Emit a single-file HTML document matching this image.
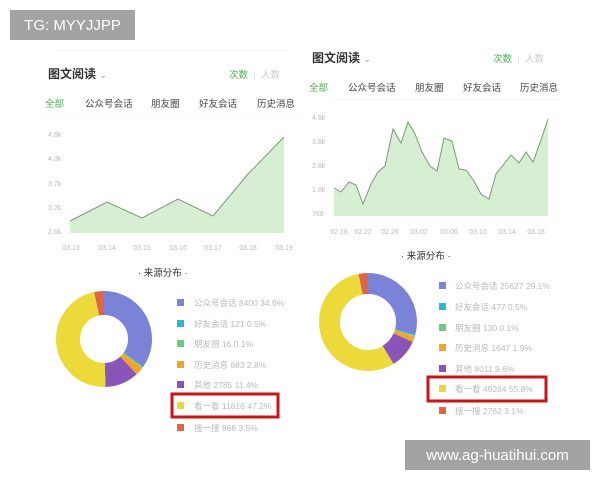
<!DOCTYPE html>
<html><head><meta charset="utf-8"><style>
body{margin:0;width:600px;height:480px;background:#fff;position:relative;overflow:hidden;font-family:"Liberation Sans","Noto Sans CJK SC",sans-serif}
.a{position:absolute;white-space:nowrap}
.t{font-size:12px;color:#333;font-weight:bold}
.tab{font-size:9.5px;color:#444}
.g{color:#4caf50}
.lg{font-size:8.5px;color:#bbb}
.sq{position:absolute;width:7px;height:7px}
.wm{position:absolute;background:#a3a3a3;color:#fff;font-size:15px;display:flex;align-items:center;justify-content:center}
</style></head><body>
<svg class="a" style="left:0;top:0" width="600" height="480">
<line x1="55" y1="50" x2="288" y2="50" stroke="#f2f2f2"/>
<line x1="40" y1="116" x2="300" y2="116" stroke="#f4f4f4"/>
<line x1="330" y1="99" x2="560" y2="99" stroke="#f4f4f4"/>
<polygon fill="#d6efd3" points="70,233 70,221 107,202 142,218 178,199 213,216 248,174 284,137 284,233"/>
<polyline fill="none" stroke="#7a9a76" stroke-width="1" points="70,221 107,202 142,218 178,199 213,216 248,174 284,137"/>
<polygon fill="#d6efd3" points="334,216 334,188 341,192 349,182 356,185 363,204 371,184 378,172 385,166 393,129 401,143 408,122 415,134 422,152 430,166 437,171 444,138 452,141 459,169 466,170 474,181 481,194 489,199 496,174 504,164 511,155 519,163 526,152 533,162 541,140 548,119 548,216"/>
<polyline fill="none" stroke="#7a9a76" stroke-width="1" points="334,188 341,192 349,182 356,185 363,204 371,184 378,172 385,166 393,129 401,143 408,122 415,134 422,152 430,166 437,171 444,138 452,141 459,169 466,170 474,181 481,194 489,199 496,174 504,164 511,155 519,163 526,152 533,162 541,140 548,119"/>
<g font-size="7" fill="#bbb" font-family="Liberation Sans">
<text x="48" y="137">4.8k</text><text x="48" y="161">4.3k</text><text x="48" y="186">3.7k</text><text x="48" y="210">3.2k</text><text x="48" y="234">2.6k</text>
<g text-anchor="middle"><text x="71" y="250">03.13</text><text x="107" y="250">03.14</text><text x="142" y="250">03.15</text><text x="178" y="250">03.16</text><text x="213" y="250">03.17</text><text x="248" y="250">03.18</text><text x="284" y="250">03.19</text>
<text x="339" y="234">02.18</text><text x="363" y="234">02.22</text><text x="390" y="234">02.26</text><text x="419" y="234">03.02</text><text x="449" y="234">03.06</text><text x="478" y="234">03.10</text><text x="507" y="234">03.14</text><text x="536" y="234">03.18</text></g>
<text x="312" y="120">4.8k</text><text x="312" y="144">3.8k</text><text x="312" y="168">2.8k</text><text x="312" y="192">1.8k</text><text x="312" y="216">768</text>
</g>
<g transform="translate(104,339) rotate(-90)" fill="none" stroke-width="24">
<circle r="36" pathLength="100" stroke="#7b83d8" stroke-dasharray="34.6 100" stroke-dashoffset="0"/>
<circle r="36" pathLength="100" stroke="#26b9d0" stroke-dasharray="0.5 100" stroke-dashoffset="-34.6"/>
<circle r="36" pathLength="100" stroke="#f2a526" stroke-dasharray="2.9 100" stroke-dashoffset="-35.2"/>
<circle r="36" pathLength="100" stroke="#8a55b8" stroke-dasharray="11.4 100" stroke-dashoffset="-38.1"/>
<circle r="36" pathLength="100" stroke="#ecd93a" stroke-dasharray="47.2 100" stroke-dashoffset="-49.5"/>
<circle r="36" pathLength="100" stroke="#e06545" stroke-dasharray="3.3 100" stroke-dashoffset="-96.7"/>
</g>
<g transform="translate(368,322) rotate(-90)" fill="none" stroke-width="21">
<circle r="38.5" pathLength="100" stroke="#7b83d8" stroke-dasharray="29.1 100" stroke-dashoffset="0"/>
<circle r="38.5" pathLength="100" stroke="#26b9d0" stroke-dasharray="0.5 100" stroke-dashoffset="-29.1"/>
<circle r="38.5" pathLength="100" stroke="#f2a526" stroke-dasharray="2.0 100" stroke-dashoffset="-29.7"/>
<circle r="38.5" pathLength="100" stroke="#8a55b8" stroke-dasharray="9.6 100" stroke-dashoffset="-31.7"/>
<circle r="38.5" pathLength="100" stroke="#ecd93a" stroke-dasharray="55.6 100" stroke-dashoffset="-41.3"/>
<circle r="38.5" pathLength="100" stroke="#e06545" stroke-dasharray="3.1 100" stroke-dashoffset="-96.9"/>
</g>
<rect x="172" y="394" width="106" height="23" fill="none" stroke="#c8151b" stroke-width="3"/>
<rect x="428" y="377" width="118" height="24" fill="none" stroke="#c8151b" stroke-width="3"/>
</svg>
<div class="a t" style="left:48px;top:65px">图文阅读 <span style="font-weight:normal;color:#999;font-size:9px">⌄</span></div>
<div class="a tab" style="left:229px;top:67px"><span class="g">次数</span> <span style="color:#ddd">&nbsp;|&nbsp;</span> <span style="color:#ccc">人数</span></div>
<div class="a tab g" style="left:45px;top:96px">全部</div>
<div class="a tab" style="left:85px;top:96px">公众号会话</div>
<div class="a tab" style="left:151px;top:96px">朋友圈</div>
<div class="a tab" style="left:199px;top:96px">好友会话</div>
<div class="a tab" style="left:257px;top:96px">历史消息</div>
<div class="a t" style="left:312px;top:49px">图文阅读 <span style="font-weight:normal;color:#999;font-size:9px">⌄</span></div>
<div class="a tab" style="left:493px;top:51px"><span class="g">次数</span> <span style="color:#ddd">&nbsp;|&nbsp;</span> <span style="color:#ccc">人数</span></div>
<div class="a tab g" style="left:309px;top:80px">全部</div>
<div class="a tab" style="left:348px;top:80px">公众号会话</div>
<div class="a tab" style="left:415px;top:80px">朋友圈</div>
<div class="a tab" style="left:463px;top:80px">好友会话</div>
<div class="a tab" style="left:520px;top:80px">历史消息</div>
<div class="a" style="left:138px;top:265px;font-size:9.5px;color:#333">· 来源分布 ·</div>
<div class="a" style="left:401px;top:248px;font-size:9.5px;color:#333">· 来源分布 ·</div>
<div class="sq" style="left:177px;top:299px;background:#7b83d8"></div><div class="a lg" style="left:194px;top:297px">公众号会话 8400 34.6%</div>
<div class="sq" style="left:177px;top:320px;background:#26b9d0"></div><div class="a lg" style="left:194px;top:318px">好友会话 121 0.5%</div>
<div class="sq" style="left:177px;top:340px;background:#6cc97a"></div><div class="a lg" style="left:194px;top:338px">朋友圈 16 0.1%</div>
<div class="sq" style="left:177px;top:361px;background:#f2a526"></div><div class="a lg" style="left:194px;top:359px">历史消息 683 2.8%</div>
<div class="sq" style="left:177px;top:381px;background:#8a55b8"></div><div class="a lg" style="left:194px;top:379px">其他 2785 11.4%</div>
<div class="sq" style="left:177px;top:402px;background:#ecd93a"></div><div class="a lg" style="left:194px;top:400px">看一看 11616 47.2%</div>
<div class="sq" style="left:177px;top:424px;background:#e06545"></div><div class="a lg" style="left:194px;top:422px">搜一搜 866 3.5%</div>
<div class="sq" style="left:439px;top:282px;background:#7b83d8"></div><div class="a lg" style="left:455px;top:280px">公众号会话 25627 29.1%</div>
<div class="sq" style="left:439px;top:303px;background:#26b9d0"></div><div class="a lg" style="left:455px;top:301px">好友会话 477 0.5%</div>
<div class="sq" style="left:439px;top:324px;background:#6cc97a"></div><div class="a lg" style="left:455px;top:322px">朋友圈 130 0.1%</div>
<div class="sq" style="left:439px;top:344px;background:#f2a526"></div><div class="a lg" style="left:455px;top:342px">历史消息 1647 1.9%</div>
<div class="sq" style="left:439px;top:365px;background:#8a55b8"></div><div class="a lg" style="left:455px;top:363px">其他 8011 9.6%</div>
<div class="sq" style="left:439px;top:385px;background:#ecd93a"></div><div class="a lg" style="left:455px;top:383px">看一看 49264 55.8%</div>
<div class="sq" style="left:439px;top:407px;background:#e06545"></div><div class="a lg" style="left:455px;top:405px">搜一搜 2762 3.1%</div>
<div class="wm" style="left:10px;top:10px;width:125px;height:30px">TG: MYYJJPP</div>
<div class="wm" style="left:405px;top:440px;width:185px;height:30px">www.ag-huatihui.com</div>
</body></html>
